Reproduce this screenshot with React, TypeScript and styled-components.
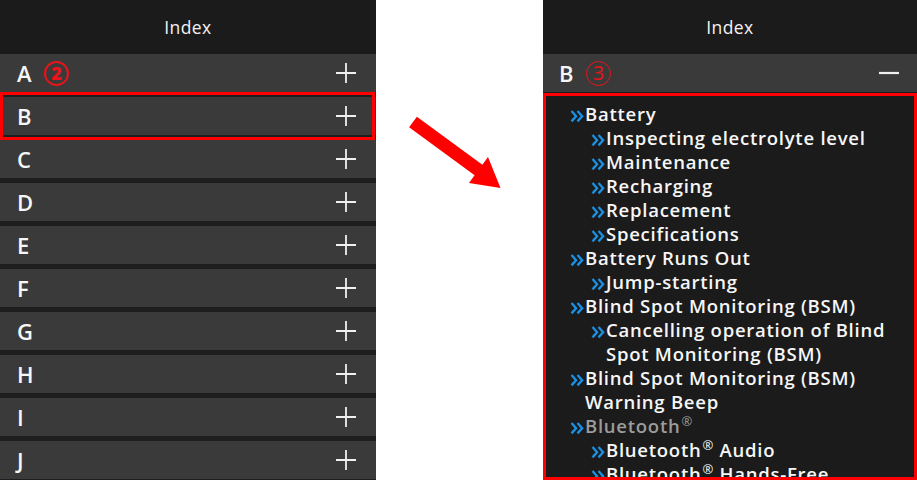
import React from "react";
import styled, { createGlobalStyle } from "styled-components";

const Global = createGlobalStyle`
  html, body { margin: 0; padding: 0; background: #ffffff; }
  body { font-family: "Open Sans", "Noto Sans", sans-serif; }
  * { box-sizing: border-box; }
`;

const Page = styled.div`
  display: flex;
  width: 917px;
  height: 480px;
  overflow: hidden;
  background: #ffffff;
`;

const Panel = styled.div<{ $w: number }>`
  width: ${(p) => p.$w}px;
  flex: none;
  display: flex;
  flex-direction: column;
  background: #1e1e1e;
  height: 480px;
  overflow: hidden;
`;

const Header = styled.div`
  height: 54px;
  flex: none;
  display: flex;
  align-items: center;
  justify-content: center;
  background: #1b1b1b;
  color: #f2f2f2;
  font-size: 17.5px;
  font-weight: 500;
  letter-spacing: 0.4px;
`;

const Rows = styled.div`
  display: flex;
  flex-direction: column;
  gap: 5px;
`;

const Row = styled.div`
  position: relative;
  height: 38px;
  flex: none;
  display: flex;
  align-items: center;
  padding: 0 19px 0 17px;
  background: #3a3a3a;
  color: #f6f6f6;
  font-size: 22px;
  font-weight: 600;
`;

const Letter = styled.span`
  width: 27px;
`;

const Badge = styled.span<{ $bold?: boolean }>`
  display: inline-flex;
  align-items: center;
  justify-content: center;
  width: 25px;
  height: 25px;
  border-radius: 50%;
  border: ${(p) => (p.$bold ? "2.5px" : "1.6px")} solid #e8141a;
  color: #e8141a;
  font-size: ${(p) => (p.$bold ? "18px" : "20px")};
  font-weight: ${(p) => (p.$bold ? 800 : 400)};
  line-height: 1;
`;

const Spacer = styled.span`
  flex: 1;
`;

const Highlight = styled.div`
  position: absolute;
  inset: -5px 1px -5px 0;
  border: 3px solid #ff0000;
  pointer-events: none;
`;

const Gutter = styled.div`
  flex: 1;
  padding: 112px 0 0 30px;
`;

const OpenRow = styled(Row)`
  padding-left: 16px;
  padding-right: 17px;
  margin-bottom: 1px;
`;

const List = styled.div`
  flex: 1;
  border: 3px solid #ff0000;
  background: #1b1b1b;
  padding: 6px 4px 0 24px;
  overflow: hidden;
  min-height: 0;
`;

const Item = styled.div<{ $level: number }>`
  display: flex;
  align-items: flex-start;
  padding-left: ${(p) => (p.$level - 1) * 21}px;
  font-size: 18.5px;
  line-height: 24px;
  font-weight: 600;
  letter-spacing: 0.75px;
  color: #f6f6f6;
`;

const Chev = styled.svg`
  flex: none;
  width: 15px;
  height: 24px;
`;

const Label = styled.span<{ $dim?: boolean }>`
  color: ${(p) => (p.$dim ? "#9c9c9c" : "#f6f6f6")};
`;

const Reg = styled.span`
  display: inline-block;
  font-size: 13px;
  line-height: 1;
  position: relative;
  top: -7px;
  margin-left: 1px;
  font-weight: 500;
`;

const PlusIcon = () => (
  <svg width="22" height="22" viewBox="0 0 22 22">
    <path d="M11 1v20M1 11h20" stroke="#f0f0f0" strokeWidth="1.8" />
  </svg>
);

const MinusIcon = () => (
  <svg width="22" height="22" viewBox="0 0 22 22">
    <path d="M1 11h20" stroke="#f0f0f0" strokeWidth="2.2" />
  </svg>
);

const Chevron = () => (
  <Chev viewBox="0 0 15 24">
    <path
      d="M1.5 9l4.6 5.2-4.6 5.2M7.5 9l4.6 5.2-4.6 5.2"
      fill="none"
      stroke="#1c8fe0"
      strokeWidth="2.4"
      strokeLinejoin="miter"
    />
  </Chev>
);

type Entry = { level: number; text: React.ReactNode; dim?: boolean };

const R = () => <Reg>®</Reg>;

const entries: Entry[] = [
  { level: 1, text: "Battery" },
  { level: 2, text: "Inspecting electrolyte level" },
  { level: 2, text: "Maintenance" },
  { level: 2, text: "Recharging" },
  { level: 2, text: "Replacement" },
  { level: 2, text: "Specifications" },
  { level: 1, text: "Battery Runs Out" },
  { level: 2, text: "Jump-starting" },
  { level: 1, text: "Blind Spot Monitoring (BSM)" },
  { level: 2, text: "Cancelling operation of Blind Spot Monitoring (BSM)" },
  { level: 1, text: "Blind Spot Monitoring (BSM) Warning Beep" },
  { level: 1, text: <>Bluetooth<R /></>, dim: true },
  { level: 2, text: <>Bluetooth<R /> Audio</> },
  { level: 2, text: <>Bluetooth<R /> Hands-Free</> },
];

const letters = ["A", "B", "C", "D", "E", "F", "G", "H", "I", "J"];

export default function App() {
  return (
    <>
      <Global />
      <Page>
        <Panel $w={376}>
          <Header>Index</Header>
          <Rows>
            {letters.map((l) => (
              <Row key={l}>
                <Letter>{l}</Letter>
                {l === "A" && <Badge $bold>2</Badge>}
                <Spacer />
                <PlusIcon />
                {l === "B" && <Highlight />}
              </Row>
            ))}
          </Rows>
        </Panel>
        <Gutter>
          <svg width="100" height="80" viewBox="405 112 100 80">
            <polygon
              points="415.9,116.8 481.4,164.8 487,157 499.5,188 468,183 473.6,175.2 408.1,127.2"
              fill="#ff0000"
            />
          </svg>
        </Gutter>
        <Panel $w={374}>
          <Header>Index</Header>
          <OpenRow>
            <Letter>B</Letter>
            <Badge>3</Badge>
            <Spacer />
            <MinusIcon />
          </OpenRow>
          <List>
            {entries.map((e, i) => (
              <Item key={i} $level={e.level}>
                <Chevron />
                <Label $dim={e.dim}>{e.text}</Label>
              </Item>
            ))}
          </List>
        </Panel>
      </Page>
    </>
  );
}
